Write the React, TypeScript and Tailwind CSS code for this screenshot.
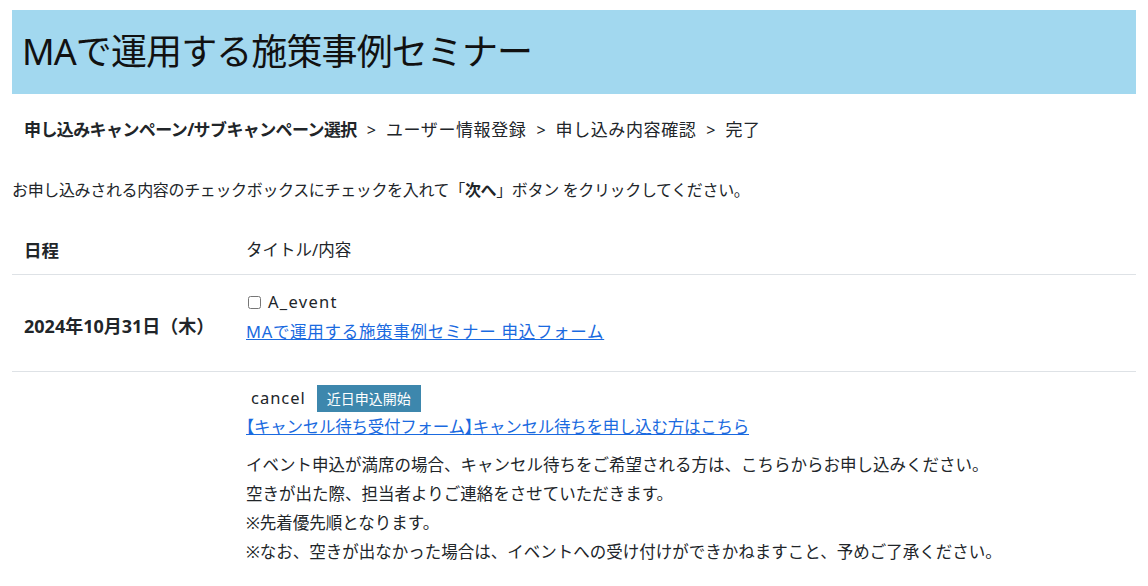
import React from "react"

const steps = [
  { label: "申し込みキャンペーン/サブキャンペーン選択", active: true },
  { label: "ユーザー情報登録" },
  { label: "申し込み内容確認" },
  { label: "完了" },
]

const notes = [
  "イベント申込が満席の場合、キャンセル待ちをご希望される方は、こちらからお申し込みください。",
  "空きが出た際、担当者よりご連絡をさせていただきます。",
  "※先着優先順となります。",
  "※なお、空きが出なかった場合は、イベントへの受け付けができかねますこと、予めご了承ください。",
]

export default function App() {
  return (
    <div
      className="w-[1148px] h-[586px] overflow-hidden bg-white px-[12px] pt-[10px] text-[#212529]"
      style={{ fontFamily: '"Noto Sans", "Noto Sans CJK JP", sans-serif' }}
    >
      {/* Title */}
      <div className="h-[84px] bg-[#a2d8ef] flex items-center pl-[10px]">
        <h1 className="text-[36px] leading-none font-normal text-[#111] tracking-[-0.9px]">
          MAで運用する施策事例セミナー
        </h1>
      </div>

      {/* Steps */}
      <div className="mt-[24px] px-[12px] h-[24px] flex items-center text-[17px] leading-[24px]">
        {steps.map((s, i) => (
          <React.Fragment key={s.label}>
            {i > 0 && <span className="mx-[10px] text-[16px]">&gt;</span>}
            <span className={s.active ? "font-bold tracking-[-0.6px]" : "tracking-[0.6px]"}>{s.label}</span>
          </React.Fragment>
        ))}
      </div>

      <p className="mt-[36px] text-[16px] leading-[24px] tracking-[-0.35px]">
        お申し込みされる内容のチェックボックスにチェックを入れて「<b>次へ</b>」ボタン をクリックしてください。
      </p>

      {/* Table */}
      <div className="mt-[24px] text-[16.5px]">
        <div className="flex border-b border-[#dee2e6]">
          <div className="w-[222px] px-[12px] py-[12px] leading-[24px] font-bold text-[17.5px]">日程</div>
          <div className="flex-1 px-[12px] py-[12px] leading-[24px]">タイトル/内容</div>
        </div>

        <div className="flex border-b border-[#dee2e6]">
          <div className="w-[222px] px-[12px] flex items-center pt-[6px] font-bold text-[18px]">
            2024年10月31日（木）
          </div>
          <div className="flex-1 px-[12px] pt-[12px] pb-[24px]">
            <label className="flex items-center h-[30px]">
              <input type="checkbox" className="w-[13px] h-[13px] mr-[7px] ml-[2px]" />
              <span className="tracking-[1.3px]">A_event</span>
            </label>
            <a href="#" className="block h-[30px] leading-[30px] text-[#1a6ae0] underline tracking-[0.7px]">
              MAで運用する施策事例セミナー 申込フォーム
            </a>
          </div>
        </div>

        <div className="flex">
          <div className="w-[222px] px-[12px]" />
          <div className="flex-1 px-[12px] pt-[12px]">
            <div className="flex items-center h-[28px]">
              <span className="ml-[5px] tracking-[1px]">cancel</span>
              <span className="ml-[11px] h-[27px] px-[10px] flex items-center bg-[#3d87ad] text-white text-[14px]">
                近日申込開始
              </span>
            </div>
            <a href="#" className="block h-[30px] leading-[30px] text-[#1a6ae0] underline tracking-[-0.25px]">
              <span className="[font-feature-settings:'halt']">【</span>キャンセル待ち受付フォーム<span className="[font-feature-settings:'halt']">】</span>キャンセル待ちを申し込む方はこちら
            </a>
            <div className="mt-[8px] leading-[29px]">
              {notes.map((n) => (
                <p key={n}>{n}</p>
              ))}
            </div>
          </div>
        </div>
      </div>
    </div>
  )
}
